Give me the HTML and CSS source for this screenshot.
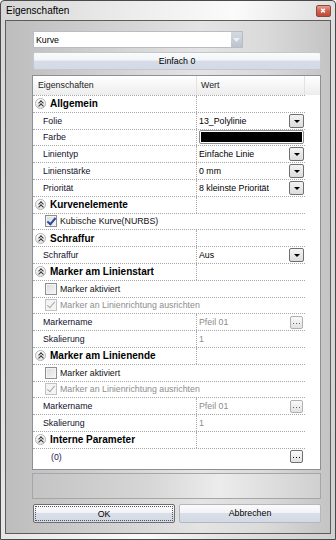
FILE: index.html
```html
<!DOCTYPE html>
<html>
<head>
  <title>Eigenschaften</title>
  <link rel="stylesheet" href="styles.css">
</head>
<body>
  <div class="window">
    <div class="titlebar">
      <span class="title">Eigenschaften</span>
      <span class="close">
        <svg width="15" height="12" viewBox="0 0 15 12">
          <path d="M5.5 3.5 L9.5 7.5 M9.5 3.5 L5.5 7.5" stroke="#fff" stroke-width="1.6" fill="none"/>
        </svg>
      </span>
    </div>

    <div class="client">
      <div class="combo">
        <span class="combo-text">Kurve</span>
        <span class="combo-btn">
          <svg width="7" height="4" viewBox="0 0 7 4"><path d="M0 0 H7 L3.5 4 Z" fill="#eef0f4"/></svg>
        </span>
      </div>

      <div class="mode">Einfach 0</div>

      <div class="grid">
        <div class="grid-head">
          <div class="head-cell name">Eigenschaften</div>
          <div class="head-cell">Wert</div>
          <div class="head-rest"></div>
        </div>

        <div class="rows">
          <div class="row cat"><div class="cell name"><span class="chev"></span>Allgemein</div><div class="cell"></div></div>
          <div class="row"><div class="cell name">Folie</div><div class="cell value">13_Polylinie<span class="drop"></span></div></div>
          <div class="row"><div class="cell name">Farbe</div><div class="cell value"><span class="swatch"><span></span></span></div></div>
          <div class="row"><div class="cell name">Linientyp</div><div class="cell value">Einfache Linie<span class="drop"></span></div></div>
          <div class="row"><div class="cell name">Linienstärke</div><div class="cell value">0 mm<span class="drop"></span></div></div>
          <div class="row"><div class="cell name">Priorität</div><div class="cell value">8 kleinste Priorität<span class="drop"></span></div></div>

          <div class="row cat"><div class="cell name"><span class="chev"></span>Kurvenelemente</div><div class="cell"></div></div>
          <div class="row wide"><div class="cell check"><span class="box checked"></span>Kubische Kurve(NURBS)</div></div>

          <div class="row cat"><div class="cell name"><span class="chev"></span>Schraffur</div><div class="cell"></div></div>
          <div class="row"><div class="cell name">Schraffur</div><div class="cell value">Aus<span class="drop"></span></div></div>

          <div class="row cat"><div class="cell name"><span class="chev"></span>Marker am Linienstart</div><div class="cell"></div></div>
          <div class="row wide"><div class="cell check"><span class="box"></span>Marker aktiviert</div></div>
          <div class="row wide"><div class="cell check off"><span class="box checked off"></span>Marker an Linienrichtung ausrichten</div></div>
          <div class="row"><div class="cell name">Markername</div><div class="cell value off">Pfeil 01<span class="dots off"><svg width="11" height="11" viewBox="0 0 11 11"><rect x="2" y="6" width="1" height="1"/><rect x="5" y="6" width="1" height="1"/><rect x="8" y="6" width="1" height="1"/></svg></span></div></div>
          <div class="row"><div class="cell name">Skalierung</div><div class="cell value off">1</div></div>

          <div class="row cat"><div class="cell name"><span class="chev"></span>Marker am Linienende</div><div class="cell"></div></div>
          <div class="row wide"><div class="cell check"><span class="box"></span>Marker aktiviert</div></div>
          <div class="row wide"><div class="cell check off"><span class="box checked off"></span>Marker an Linienrichtung ausrichten</div></div>
          <div class="row"><div class="cell name">Markername</div><div class="cell value off">Pfeil 01<span class="dots off"><svg width="11" height="11" viewBox="0 0 11 11"><rect x="2" y="6" width="1" height="1"/><rect x="5" y="6" width="1" height="1"/><rect x="8" y="6" width="1" height="1"/></svg></span></div></div>
          <div class="row"><div class="cell name">Skalierung</div><div class="cell value off">1</div></div>

          <div class="row cat"><div class="cell name"><span class="chev"></span>Interne Parameter</div><div class="cell"></div></div>
          <div class="row wide last"><div class="cell params">(0)<span class="dots"><svg width="11" height="11" viewBox="0 0 11 11"><rect x="2" y="6" width="1" height="1"/><rect x="5" y="6" width="1" height="1"/><rect x="8" y="6" width="1" height="1"/></svg></span></div></div>
        </div>
      </div>

      <div class="desc"></div>

      <div class="actions">
        <div class="btn default"><span>OK</span></div>
        <div class="btn"><span>Abbrechen</span></div>
      </div>
    </div>
  </div>
</body>
</html>
```

FILE: styles.css
```css
body {
  margin: 0;
  font-family: "Liberation Sans", Arial, sans-serif;
  font-size: 8.8px;
  color: #111;
}

.window {
  width: 336px;
  height: 540px;
  box-sizing: border-box;
  border: 1px solid #4a4a4a;
  border-radius: 4px 4px 0 0;
  padding: 0 4px 5px 4px;
  background: linear-gradient(100deg, #d6d6d6 0%, #ececec 30%, #fbfbfb 55%, #e2e2e2 75%, #d0d0d0 100%);
  display: flex;
  flex-direction: column;
}

.titlebar {
  height: 19px;
  display: flex;
  align-items: center;
  justify-content: space-between;
}

.title {
  font-size: 10px;
  color: #000;
  padding-left: 1px;
  margin-top: -1px;
}

.close {
  width: 15px;
  height: 12px;
  margin: 1px 0 0 0;
  border: 1px solid #8a4a40;
  border-radius: 2px;
  background: linear-gradient(#e8a090, #d0604c 50%, #c04a36);
  box-sizing: border-box;
  display: flex;
  align-items: center;
  justify-content: center;
}

.close svg {
  display: block;
  margin: -1px 0 0 -1px;
}

.client {
  flex: 1;
  border: 1px solid #5c5c5c;
  padding: 10px 9px 0 26px;
  background: linear-gradient(90deg, #bdbdbd 0%, #cdcdcd 25%, #e4e4e4 60%, #dadada 80%, #c4c4c4 100%);
  display: flex;
  flex-direction: column;
}

/* top combo box */
.combo {
  width: 210px;
  height: 17px;
  margin-left: 1px;
  box-sizing: border-box;
  border: 1px solid #b8bcc4;
  background: #fff;
  display: flex;
  align-items: center;
}

.combo-text {
  flex: 1;
  padding-left: 2px;
  color: #000;
}

.combo-btn {
  width: 11px;
  height: 15px;
  background: linear-gradient(#d5dae2, #bcc3ce);
  display: flex;
  align-items: center;
  justify-content: center;
}

.mode {
  width: 288px;
  height: 18px;
  margin: 4px 0 0 1px;
  box-sizing: border-box;
  border: 1px solid #c4c8ce;
  border-radius: 2px;
  background: linear-gradient(#fafbfc 0%, #f2f4f7 45%, #d6dde9 50%, #d3dae6 100%);
  text-align: center;
  line-height: 16px;
  color: #000;
}

/* property grid */
.grid {
  width: 289px;
  height: 395px;
  margin-top: 5px;
  box-sizing: border-box;
  border: 1px solid #8a8f98;
  background: #fff;
}

.grid-head {
  height: 19px;
  display: flex;
  background: linear-gradient(#ffffff, #f4f4f4 60%, #ededed);
}

.head-cell {
  width: 108px;
  padding-left: 4px;
  box-sizing: border-box;
  line-height: 19px;
  border-right: 1px solid #e2e2e2;
  color: #222;
}

.head-cell.name {
  width: 164px;
  padding-left: 5px;
}

.head-rest {
  flex: 1;
}

.rows {
  width: 272px;
}

.row {
  height: 16.8px;
  box-sizing: border-box;
  border-top: 1px dotted #a8a8a8;
  display: grid;
  grid-template-columns: 164px 108px;
}

.row.wide {
  grid-template-columns: 272px;
}

.cell {
  display: flex;
  align-items: center;
  min-width: 0;
  white-space: nowrap;
}

.cell.name {
  box-sizing: border-box;
  border-right: 1px dotted #a8a8a8;
  padding-left: 10px;
  color: #10102a;
}

.cat .cell.name {
  padding-left: 2px;
  font-weight: bold;
  font-size: 10px;
  color: #000;
}

.cell.value {
  padding-left: 2px;
  color: #000;
}

.off {
  color: #8c8c8c;
}

.cell.value.off {
  color: #8c8c8c;
}

.chev {
  width: 11px;
  height: 11px;
  margin-right: 4px;
  box-sizing: border-box;
  border: 1px solid #b4b4b4;
  border-radius: 50%;
  background: linear-gradient(#ffffff, #e4e4e4);
  position: relative;
}

.chev::before,
.chev::after {
  content: "";
  position: absolute;
  left: 3px;
  width: 3px;
  height: 3px;
  border-left: 1px solid #333;
  border-top: 1px solid #333;
  transform: rotate(45deg);
}

.chev::before {
  top: 2px;
}

.chev::after {
  top: 5px;
}

.cell.check {
  padding-left: 12px;
}

.box {
  width: 12px;
  height: 12px;
  margin-right: 3px;
  box-sizing: border-box;
  border: 1px solid #8e8f8f;
  background: linear-gradient(135deg, #dcdcdc, #f6f6f6);
  box-shadow: inset 0 0 0 1px #f4f4f4;
  position: relative;
}

.box.off {
  border-color: #c2c2c2;
  background: #f4f4f4;
}

.box.checked::after {
  content: "";
  position: absolute;
  left: 3px;
  top: 0px;
  width: 3px;
  height: 7px;
  border-right: 2px solid #2a4a9a;
  border-bottom: 2px solid #2a4a9a;
  transform: rotate(40deg);
}

.box.checked.off::after {
  border-color: #a8a8a8;
  border-width: 0 1px 1px 0;
}

.drop {
  width: 15px;
  height: 14px;
  margin-left: auto;
  margin-right: 1px;
  box-sizing: border-box;
  border: 1px solid #707070;
  border-radius: 2px;
  background: linear-gradient(#f4f4f4, #dcdcdc);
  position: relative;
}

.drop::after {
  content: "";
  position: absolute;
  left: 4px;
  top: 5px;
  border-left: 3px solid transparent;
  border-right: 3px solid transparent;
  border-top: 3px solid #000;
}

.swatch {
  width: 105px;
  height: 14px;
  margin-left: 0;
  box-sizing: border-box;
  border: 1px solid #8c8c8c;
  border-radius: 2px;
  padding: 1px;
  display: flex;
}

.swatch span {
  flex: 1;
  background: #000;
}

.dots {
  width: 13px;
  height: 13px;
  margin-left: auto;
  margin-right: 2px;
  box-sizing: border-box;
  border: 1px solid #707070;
  border-radius: 2px;
  background: linear-gradient(#fafafa, #e2e2e2);
  fill: #000;
}

.dots svg {
  display: block;
}

.dots.off {
  border-color: #b0b0b0;
  fill: #606060;
}

.cell.params {
  padding-left: 18px;
  color: #1a1a50;
}

/* description panel */
.desc {
  width: 289px;
  height: 26px;
  margin-top: 3px;
  box-sizing: border-box;
  border: 1px solid #a6a6a6;
  background: linear-gradient(90deg, #c4c4c4, #d6d6d6 40%, #ececec 65%, #d0d0d0);
}

.actions {
  display: flex;
  gap: 4px;
  margin: 5px 0 0 1px;
}

.btn {
  width: 142px;
  height: 19px;
  box-sizing: border-box;
  border: 1px solid #b4b8be;
  border-radius: 2px;
  background: linear-gradient(#fbfbfc 0%, #f2f3f6 45%, #d9dfe9 50%, #d3dae5 100%);
  text-align: center;
  line-height: 17px;
  color: #000;
}

.btn.default {
  border-color: #6e6e6e;
  padding: 1px;
}

.btn.default span {
  display: block;
  height: 15px;
  line-height: 15px;
  border: 1px dotted #555;
  box-sizing: border-box;
}
```
